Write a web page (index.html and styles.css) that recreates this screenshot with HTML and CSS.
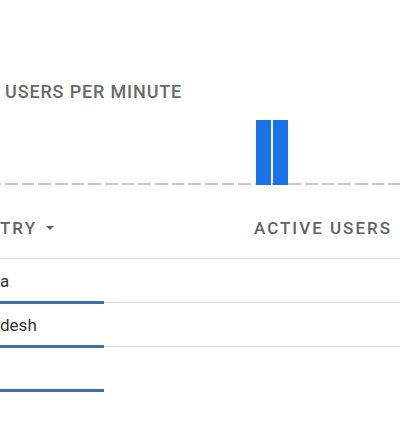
FILE: index.html
```html
<!DOCTYPE html>
<html>
<head>
<meta charset="utf-8">
<link rel="stylesheet" href="styles.css">
</head>
<body>
<div class="card">
  <div class="title">USERS PER MINUTE</div>
  <div class="chart">
    <div class="bar"></div>
    <div class="bar"></div>
  </div>
  <div class="thead">
    <div class="th-left">TRY<span class="caret"></span></div>
    <div class="th-right">ACTIVE USERS</div>
  </div>
  <div class="row">
    <div class="cell">a</div>
    <div class="track"><div class="fill" style="width:104px"></div></div>
  </div>
  <div class="row">
    <div class="cell">desh</div>
    <div class="track"><div class="fill" style="width:104px"></div></div>
  </div>
  <div class="row last">
    <div class="cell"></div>
    <div class="track"><div class="fill" style="width:104px"></div></div>
  </div>
</div>
</body>
</html>
```
FILE: styles.css
```css
html, body {
  margin: 0;
  padding: 0;
  background: #ffffff;
}
body {
  font-family: Roboto, "Liberation Sans", sans-serif;
  width: 400px;
  height: 424px;
  overflow: hidden;
}
.card {
  padding-top: 80px;
}
.title {
  font-size: 18px;
  line-height: 24px;
  font-weight: 500;
  color: #6a6a6a;
  letter-spacing: 0.85px;
  padding-left: 5px;
}
.chart {
  margin-top: 16px;
  height: 65px;
  display: flex;
  align-items: flex-end;
  gap: 2px;
  padding-left: 256px;
  background-image: repeating-linear-gradient(to right, #c8c8c8 0, #c8c8c8 12.67px, transparent 12.67px, transparent 16.67px);
  background-size: 100% 2px;
  background-position: 5px bottom;
  background-repeat: repeat-x;
}
.bar {
  width: 15px;
  height: 65px;
  background: #1a73e8;
}
.thead {
  display: flex;
  justify-content: space-between;
  align-items: center;
  padding-top: 33px;
  padding-bottom: 20px;
  padding-right: 8px;
  border-bottom: 1px solid #e2e2e2;
  margin-bottom: 1px;
  font-size: 17px;
  line-height: 20px;
  font-weight: 500;
  letter-spacing: 2px;
  color: #5f6368;
}
.th-left {
  display: flex;
  align-items: center;
}
.caret {
  display: inline-block;
  width: 0;
  height: 0;
  border-left: 4px solid transparent;
  border-right: 4px solid transparent;
  border-top: 4px solid #5f6368;
  margin-left: 9px;
}
.row {
  display: flex;
  flex-direction: column;
}
.cell {
  height: 41px;
  box-sizing: border-box;
  padding-top: 11px;
  font-size: 17px;
  line-height: 20px;
  color: #333333;
}
.track {
  height: 3px;
  background: linear-gradient(#ffffff 0, #ffffff 1px, #dcdcdc 1px, #dcdcdc 2px, #ffffff 2px);
}
.row.last .track {
  background: #ffffff;
}
.fill {
  height: 3px;
  background: #3a72ad;
}
```
